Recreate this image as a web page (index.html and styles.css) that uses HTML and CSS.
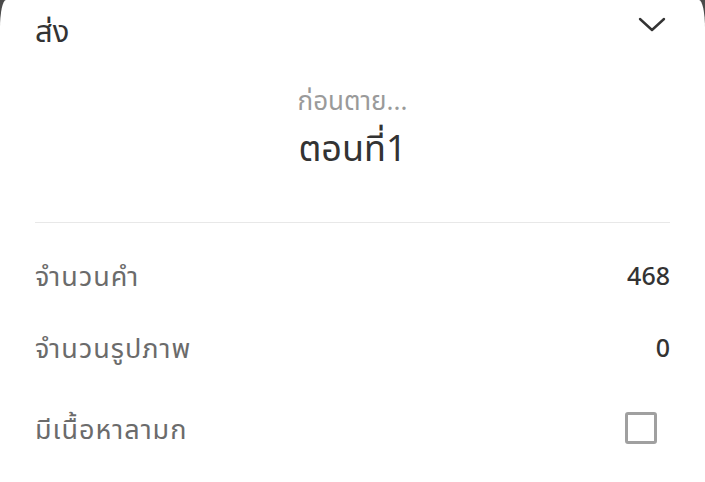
FILE: index.html
```html
<!DOCTYPE html>
<html lang="th">
<head>
  <meta charset="UTF-8" />
  <title>ส่ง</title>
  <link rel="stylesheet" href="styles.css">
</head>
<body>

<div class="sheet">
  <div class="sheet-header">
    <span class="sheet-title">ส่ง</span>
    <svg class="chevron" width="28" height="16" viewBox="0 0 28 16">
      <path d="M2 2 L14 13 L26 2" fill="none" stroke="#333" stroke-width="2.4" stroke-linecap="round" stroke-linejoin="round"/>
    </svg>
  </div>

  <div class="episode">
    <div class="story-name">ก่อนตาย...</div>
    <div class="episode-name">ตอนที่1</div>
  </div>

  <div class="divider"></div>

  <div class="info-list">
    <div class="info-row">
      <span class="label">จำนวนคำ</span>
      <span class="value">468</span>
    </div>
    <div class="info-row">
      <span class="label">จำนวนรูปภาพ</span>
      <span class="value">0</span>
    </div>
    <div class="info-row check-row">
      <span class="label">มีเนื้อหาลามก</span>
      <span class="checkbox"></span>
    </div>
  </div>
</div>

</body>
</html>
```

FILE: styles.css
```css
:root {
  --text: #333;
  --muted: #6b6b6b;
  --faint: #9a9a9a;
}

body {
  margin: 0;
  background: #4a4a4a;
  font-family: 'Noto Sans Thai', 'Roboto', 'Noto Sans', sans-serif;
  overflow: hidden;
}

.sheet {
  background: #fff;
  border-radius: 6px 6px 0 0 / 28px 28px 0 0;
  height: 482px;
  padding: 0 35px;
  box-sizing: border-box;
}

.sheet-header {
  display: flex;
  justify-content: space-between;
  align-items: center;
  height: 66px;
}

.sheet-title {
  font-size: 31px;
  line-height: 40px;
  color: var(--text);
}

.chevron {
  margin-right: 4px;
  margin-top: -16px;
}

.episode {
  text-align: center;
  padding-top: 18px;
  padding-bottom: 48px;
}

.story-name {
  font-size: 26px;
  color: var(--faint);
  line-height: 36px;
}

.episode-name {
  font-size: 36px;
  color: var(--text);
  line-height: 48px;
  margin-top: 6px;
}

.divider {
  height: 1px;
  background: #e8e8e8;
}

.info-list {
  padding-top: 18px;
}

.info-row {
  display: flex;
  justify-content: space-between;
  align-items: center;
  height: 72px;
}

.label {
  font-size: 27px;
  letter-spacing: 1px;
  color: var(--muted);
}

.value {
  font-size: 25px;
  color: var(--text);
  font-weight: 500;
}

.check-row {
  height: 90px;
}

.checkbox {
  width: 26px;
  height: 26px;
  border: 3px solid #a0a0a0;
  border-radius: 3px;
  margin-right: 13px;
  margin-top: -4px;
}
```
